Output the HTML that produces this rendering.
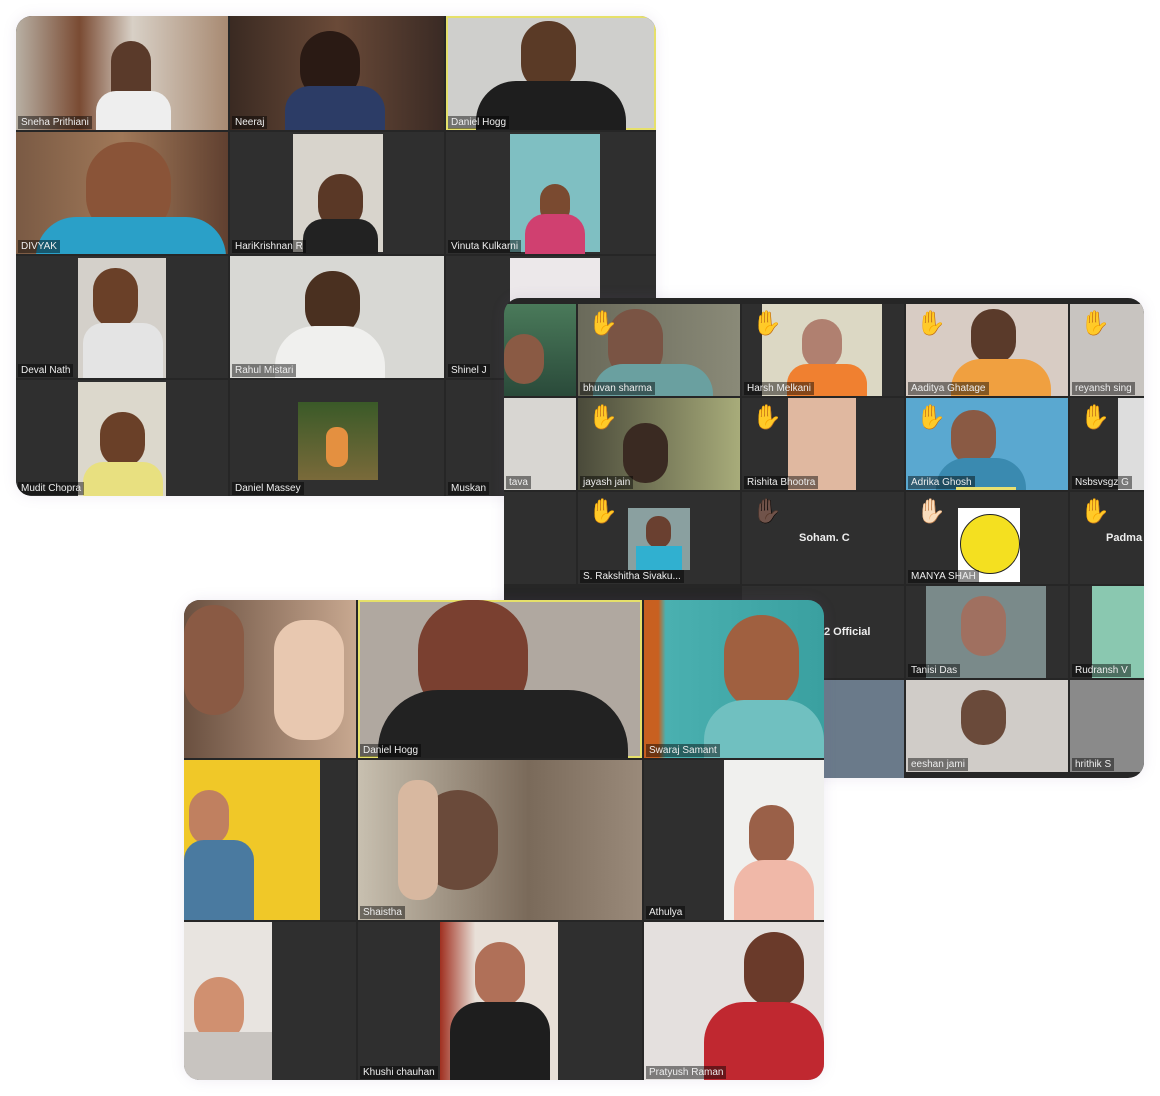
<!DOCTYPE html>
<html><head><meta charset="utf-8"><style>
body{margin:0;width:1160px;height:1096px;background:#fff;position:relative;overflow:hidden;font-family:"Liberation Sans",sans-serif}
.card{position:absolute;border-radius:16px;overflow:hidden;background:#262626;box-shadow:0 0 14px rgba(120,100,160,.12)}
.t{position:absolute;background:#2f2f2f;overflow:hidden}
.p{position:absolute}
.n{position:absolute;left:2px;bottom:1px;font-size:10px;color:#eee;background:rgba(0,0,0,.45);padding:0 3px;line-height:13px;white-space:nowrap}
.h{position:absolute;font-size:24px;line-height:24px}
.c{position:absolute;color:#eee;font-weight:bold;font-size:11px}
</style></head><body>

<!-- Card 1 -->
<div class="card" style="left:16px;top:16px;width:640px;height:480px">
 <div class="t" style="left:0;top:0;width:212px;height:114px;background:linear-gradient(90deg,#b8b0a4,#7a4b33 30%,#d8d0c6 55%,#a88a72)"><div class="p" style="left:95px;top:25px;width:40px;height:60px;border-radius:20px 20px 5px 5px;background:#5a3a2a"></div><div class="p" style="left:80px;top:75px;width:75px;height:40px;background:#eee;border-radius:20px 20px 0 0"></div><div class="n">Sneha Prithiani</div></div>
 <div class="t" style="left:214px;top:0;width:214px;height:114px;background:linear-gradient(90deg,#3a2a22,#6a4a38 50%,#3a2a24)"><div class="p" style="left:70px;top:15px;width:60px;height:70px;border-radius:30px;background:#2a1a14"></div><div class="p" style="left:55px;top:70px;width:100px;height:45px;background:#2c3c66;border-radius:25px 25px 0 0"></div><div class="n">Neeraj</div></div>
 <div class="t" style="left:430px;top:0;width:210px;height:114px;background:#cfcfcc;box-shadow:inset 0 0 0 2px #e6e06a"><div class="p" style="left:75px;top:5px;width:55px;height:70px;border-radius:27px;background:#5a3a26"></div><div class="p" style="left:30px;top:65px;width:150px;height:50px;background:#1e1e1e;border-radius:40px 40px 0 0"></div><div class="n">Daniel Hogg</div></div>

 <div class="t" style="left:0;top:116px;width:212px;height:122px;background:linear-gradient(90deg,#7a5a44,#a07858 50%,#604030)"><div class="p" style="left:70px;top:10px;width:85px;height:95px;border-radius:40px;background:#8a5438"></div><div class="p" style="left:20px;top:85px;width:190px;height:40px;background:#2aa0c8;border-radius:40px 40px 0 0"></div><div class="n">DIVYAK</div></div>
 <div class="t" style="left:214px;top:116px;width:214px;height:122px"><div class="p" style="left:63px;top:2px;width:90px;height:118px;background:#d8d4cc"><div class="p" style="left:25px;top:40px;width:45px;height:55px;border-radius:22px;background:#5a3826"></div><div class="p" style="left:10px;top:85px;width:75px;height:35px;background:#222;border-radius:20px 20px 0 0"></div></div><div class="n">HariKrishnan R</div></div>
 <div class="t" style="left:430px;top:116px;width:210px;height:122px"><div class="p" style="left:64px;top:2px;width:90px;height:118px;background:#7fbfc2"><div class="p" style="left:30px;top:50px;width:30px;height:40px;border-radius:15px;background:#7a4a30"></div><div class="p" style="left:15px;top:80px;width:60px;height:40px;background:#d04070;border-radius:20px 20px 0 0"></div></div><div class="n">Vinuta Kulkarni</div></div>

 <div class="t" style="left:0;top:240px;width:212px;height:122px"><div class="p" style="left:62px;top:2px;width:88px;height:120px;background:#d4d0ca"><div class="p" style="left:15px;top:10px;width:45px;height:60px;border-radius:22px;background:#6a4028"></div><div class="p" style="left:5px;top:65px;width:80px;height:55px;background:#e4e4e4;border-radius:20px 20px 0 0"></div></div><div class="n">Deval Nath</div></div>
 <div class="t" style="left:214px;top:240px;width:214px;height:122px;background:#d8d8d4"><div class="p" style="left:75px;top:15px;width:55px;height:65px;border-radius:27px;background:#4a3020"></div><div class="p" style="left:45px;top:70px;width:110px;height:55px;background:#f0f0ee;border-radius:40px 40px 0 0"></div><div class="n">Rahul Mistari</div></div>
 <div class="t" style="left:430px;top:240px;width:210px;height:122px"><div class="p" style="left:64px;top:2px;width:90px;height:118px;background:#ece8ea"></div><div class="n">Shinel J</div></div>

 <div class="t" style="left:0;top:364px;width:212px;height:116px"><div class="p" style="left:62px;top:2px;width:88px;height:114px;background:#dcd8cc"><div class="p" style="left:22px;top:30px;width:45px;height:55px;border-radius:22px;background:#6a4028"></div><div class="p" style="left:5px;top:80px;width:80px;height:40px;background:#e8e080;border-radius:20px 20px 0 0"></div></div><div class="n">Mudit Chopra</div></div>
 <div class="t" style="left:214px;top:364px;width:214px;height:116px"><div class="p" style="left:68px;top:22px;width:80px;height:78px;background:linear-gradient(#3a5a28,#7a6a3a)"><div class="p" style="left:28px;top:25px;width:22px;height:40px;background:#e49040;border-radius:10px"></div></div><div class="n">Daniel Massey</div></div>
 <div class="t" style="left:430px;top:364px;width:210px;height:116px"><div class="n">Muskan</div></div>
</div>

<!-- Card 2 -->
<div class="card" style="left:504px;top:298px;width:640px;height:480px">
 <div class="t" style="left:0;top:6px;width:72px;height:92px;background:linear-gradient(#4a7a5a,#2a4a3a)"><div class="p" style="left:0;top:30px;width:40px;height:50px;border-radius:20px;background:#8a5a44"></div></div>
 <div class="t" style="left:74px;top:6px;width:162px;height:92px;background:linear-gradient(90deg,#6a6a5a,#8a8a78)"><div class="p" style="left:30px;top:5px;width:55px;height:70px;border-radius:27px;background:#7a5444"></div><div class="p" style="left:15px;top:60px;width:120px;height:35px;background:#6aa0a0;border-radius:30px 30px 0 0"></div><div class="h" style="left:10px;top:8px">✋</div><div class="n">bhuvan sharma</div></div>
 <div class="t" style="left:238px;top:6px;width:162px;height:92px"><div class="p" style="left:20px;top:0;width:120px;height:92px;background:#dcd8c4"><div class="p" style="left:40px;top:15px;width:40px;height:50px;border-radius:20px;background:#b08070"></div><div class="p" style="left:25px;top:60px;width:80px;height:35px;background:#f08030;border-radius:20px 20px 0 0"></div></div><div class="h" style="left:10px;top:8px">✋</div><div class="n">Harsh Melkani</div></div>
 <div class="t" style="left:402px;top:6px;width:162px;height:92px;background:#d8ccc4"><div class="p" style="left:65px;top:5px;width:45px;height:55px;border-radius:22px;background:#5a3a2a"></div><div class="p" style="left:45px;top:55px;width:100px;height:40px;background:#f0a040;border-radius:30px 30px 0 0"></div><div class="h" style="left:10px;top:8px">✋</div><div class="n">Aaditya Ghatage</div></div>
 <div class="t" style="left:566px;top:6px;width:74px;height:92px;background:#c8c4c0"><div class="h" style="left:10px;top:8px">✋</div><div class="n">reyansh sing</div></div>

 <div class="t" style="left:0;top:100px;width:72px;height:92px;background:#d8d6d2"><div class="n">tava</div></div>
 <div class="t" style="left:74px;top:100px;width:162px;height:92px;background:linear-gradient(90deg,#4a4a3a,#a8ac7a)"><div class="p" style="left:45px;top:25px;width:45px;height:60px;border-radius:22px;background:#3a2a22"></div><div class="h" style="left:10px;top:8px">✋</div><div class="n">jayash jain</div></div>
 <div class="t" style="left:238px;top:100px;width:162px;height:92px"><div class="p" style="left:46px;top:0;width:68px;height:92px;background:#e0b8a0"></div><div class="h" style="left:10px;top:8px">✋</div><div class="n">Rishita Bhootra</div></div>
 <div class="t" style="left:402px;top:100px;width:162px;height:92px;background:#5aa8d0"><div class="p" style="left:45px;top:12px;width:45px;height:55px;border-radius:22px;background:#8a5a44"></div><div class="p" style="left:30px;top:60px;width:90px;height:35px;background:#3a8ab0;border-radius:30px 30px 0 0"></div><div class="h" style="left:10px;top:8px">✋</div><div class="n">Adrika Ghosh</div><div class="p" style="left:50px;bottom:0;width:60px;height:3px;background:#e8e070"></div></div>
 <div class="t" style="left:566px;top:100px;width:74px;height:92px"><div class="p" style="left:48px;top:0;width:26px;height:92px;background:#ddd"></div><div class="h" style="left:10px;top:8px">✋</div><div class="n">Nsbsvsgz G</div></div>

 <div class="t" style="left:0;top:194px;width:72px;height:92px"></div>
 <div class="t" style="left:74px;top:194px;width:162px;height:92px"><div class="p" style="left:50px;top:16px;width:62px;height:62px;background:#8aa0a0"><div class="p" style="left:18px;top:8px;width:25px;height:32px;border-radius:12px;background:#6a4030"></div><div class="p" style="left:8px;top:38px;width:46px;height:24px;background:#30b0d0"></div></div><div class="h" style="left:10px;top:8px">✋</div><div class="n">S. Rakshitha Sivaku...</div></div>
 <div class="t" style="left:238px;top:194px;width:162px;height:92px"><div class="h" style="left:10px;top:8px">✋🏿</div><div class="c" style="left:57px;top:40px">Soham. C</div></div>
 <div class="t" style="left:402px;top:194px;width:162px;height:92px"><div class="p" style="left:52px;top:16px;width:62px;height:74px;background:#fff"><div class="p" style="left:2px;top:6px;width:58px;height:58px;border-radius:50%;background:#f4e020;border:1px solid #222"></div></div><div class="h" style="left:10px;top:8px">✋🏻</div><div class="n">MANYA SHAH</div></div>
 <div class="t" style="left:566px;top:194px;width:74px;height:92px"><div class="h" style="left:10px;top:8px">✋</div><div class="c" style="left:36px;top:40px">Padma</div></div>

 <div class="t" style="left:238px;top:288px;width:162px;height:92px"><div class="c" style="left:82px;top:40px">2 Official</div></div>
 <div class="t" style="left:402px;top:288px;width:162px;height:92px"><div class="p" style="left:20px;top:0;width:120px;height:92px;background:#7a8a8a"><div class="p" style="left:35px;top:10px;width:45px;height:60px;border-radius:22px;background:#a07060"></div></div><div class="n">Tanisi Das</div></div>
 <div class="t" style="left:566px;top:288px;width:74px;height:92px"><div class="p" style="left:22px;top:0;width:52px;height:92px;background:#8ac8b0"></div><div class="n">Rudransh V</div></div>
 <div class="t" style="left:320px;top:382px;width:80px;height:98px;background:#6a7a8a"></div>
 <div class="t" style="left:402px;top:382px;width:162px;height:92px;background:#d0ccc8"><div class="p" style="left:55px;top:10px;width:45px;height:55px;border-radius:22px;background:#6a4a3a"></div><div class="n">eeshan jami</div></div>
 <div class="t" style="left:566px;top:382px;width:74px;height:92px;background:#8a8a8a"><div class="n">hrithik S</div></div>
</div>

<!-- Card 3 -->
<div class="card" style="left:184px;top:600px;width:640px;height:480px">
 <div class="t" style="left:0;top:0;width:172px;height:158px;background:linear-gradient(90deg,#6a5040,#c8a890)"><div class="p" style="left:0;top:5px;width:60px;height:110px;border-radius:30px;background:#8a5a44"></div><div class="p" style="left:90px;top:20px;width:70px;height:120px;border-radius:30px;background:#e8c8b0"></div></div>
 <div class="t" style="left:174px;top:0;width:284px;height:158px;background:#b0a8a0;box-shadow:inset 0 0 0 2px #e6e06a"><div class="p" style="left:60px;top:0;width:110px;height:120px;border-radius:50px;background:#7a4030"></div><div class="p" style="left:20px;top:90px;width:250px;height:70px;background:#222;border-radius:60px 60px 0 0"></div><div class="n">Daniel Hogg</div></div>
 <div class="t" style="left:460px;top:0;width:180px;height:158px;background:linear-gradient(90deg,#c86020 8%,#4ab0b0 12%,#3aa0a0)"><div class="p" style="left:80px;top:15px;width:75px;height:95px;border-radius:37px;background:#a06040"></div><div class="p" style="left:60px;top:100px;width:120px;height:60px;background:#70c0c0;border-radius:40px 40px 0 0"></div><div class="n">Swaraj Samant</div></div>

 <div class="t" style="left:0;top:160px;width:172px;height:160px"><div class="p" style="left:0;top:0;width:136px;height:160px;background:#f0c828"><div class="p" style="left:5px;top:30px;width:40px;height:55px;border-radius:20px;background:#c08060"></div><div class="p" style="left:0;top:80px;width:70px;height:80px;background:#4a7aa0;border-radius:20px 20px 0 0"></div></div></div>
 <div class="t" style="left:174px;top:160px;width:284px;height:160px;background:linear-gradient(90deg,#c8c0b0,#7a6a5a 60%,#9a8a7a)"><div class="p" style="left:60px;top:30px;width:80px;height:100px;border-radius:40px;background:#6a4a3a"></div><div class="p" style="left:40px;top:20px;width:40px;height:120px;background:#d8b8a0;border-radius:18px"></div><div class="n">Shaistha</div></div>
 <div class="t" style="left:460px;top:160px;width:180px;height:160px"><div class="p" style="left:80px;top:0;width:100px;height:160px;background:#f0f0ee"><div class="p" style="left:25px;top:45px;width:45px;height:60px;border-radius:22px;background:#9a6048"></div><div class="p" style="left:10px;top:100px;width:80px;height:60px;background:#f0b8a8;border-radius:30px 30px 0 0"></div></div><div class="n">Athulya</div></div>

 <div class="t" style="left:0;top:322px;width:172px;height:158px"><div class="p" style="left:0;top:0;width:88px;height:158px;background:#e8e4e0"><div class="p" style="left:10px;top:55px;width:50px;height:65px;border-radius:25px;background:#d09070"></div><div class="p" style="left:0;top:110px;width:88px;height:48px;background:#c8c4c0"></div></div></div>
 <div class="t" style="left:174px;top:322px;width:284px;height:158px"><div class="p" style="left:82px;top:0;width:118px;height:158px;background:linear-gradient(90deg,#a03020,#e8e0d8 30%)"><div class="p" style="left:35px;top:20px;width:50px;height:65px;border-radius:25px;background:#b07058"></div><div class="p" style="left:10px;top:80px;width:100px;height:78px;background:#1e1e1e;border-radius:30px 30px 0 0"></div></div><div class="n">Khushi chauhan</div></div>
 <div class="t" style="left:460px;top:322px;width:180px;height:158px;background:#e4e0de"><div class="p" style="left:100px;top:10px;width:60px;height:75px;border-radius:30px;background:#6a3a2a"></div><div class="p" style="left:60px;top:80px;width:120px;height:80px;background:#c02830;border-radius:40px 40px 0 0"></div><div class="n">Pratyush Raman</div></div>
</div>
</body></html>
